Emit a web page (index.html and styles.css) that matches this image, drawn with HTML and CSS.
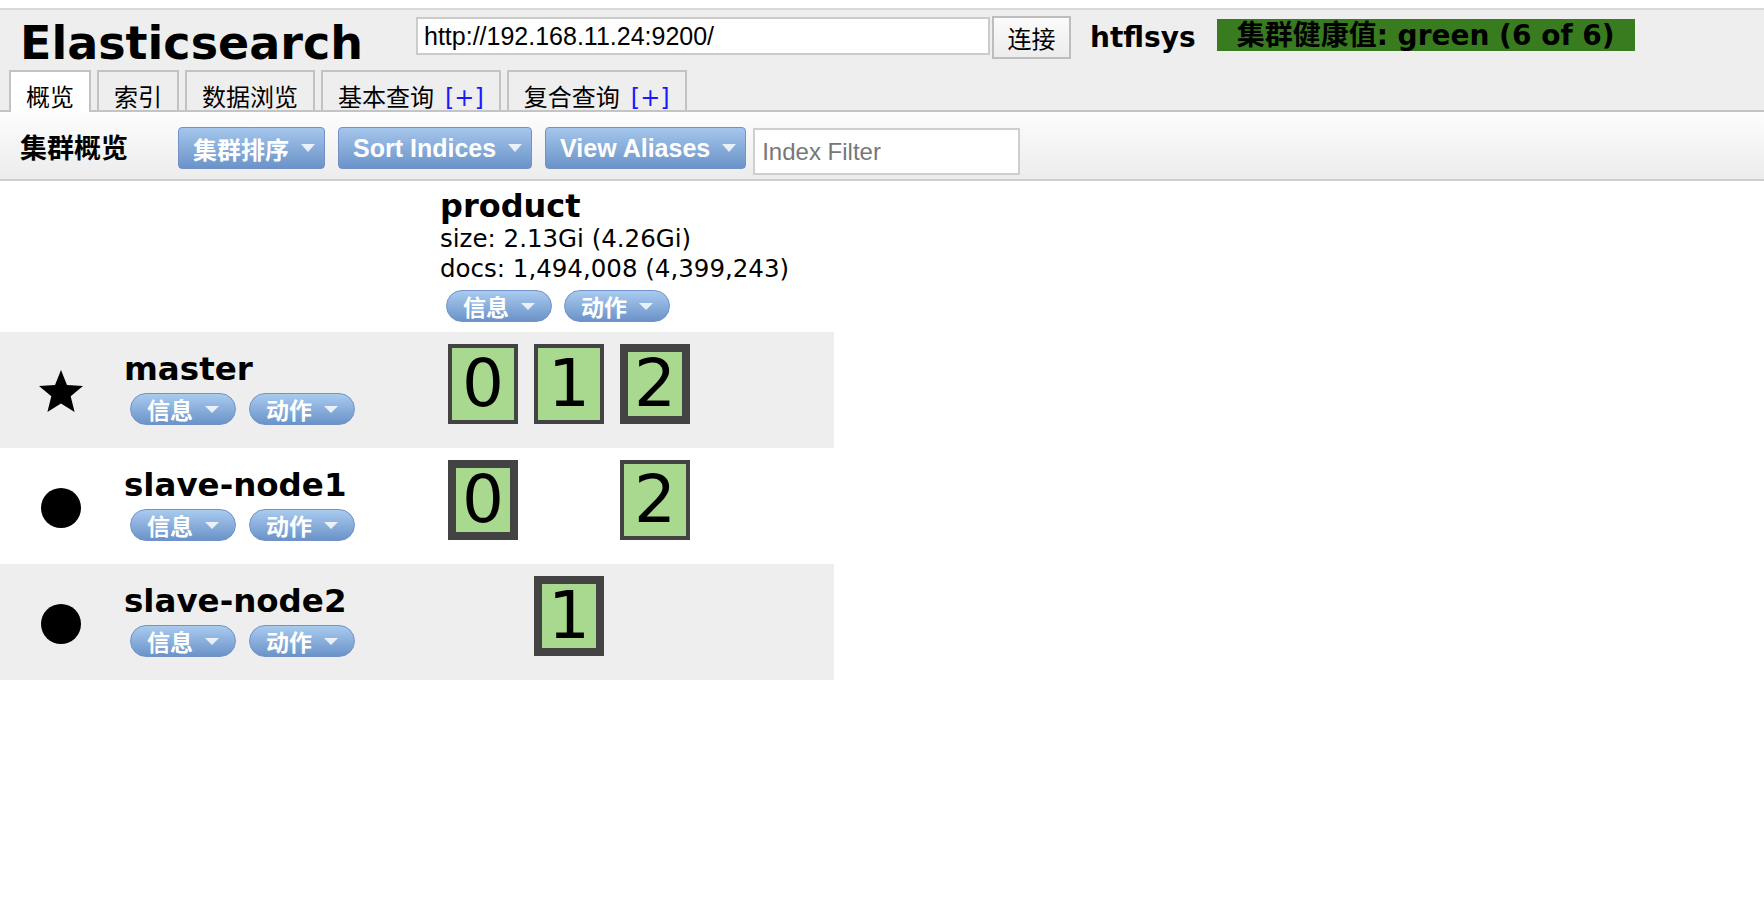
FILE: index.html
```html
<!DOCTYPE html>
<html lang="zh-CN">
<head>
<meta charset="utf-8">
<title>Elasticsearch</title>
<link rel="stylesheet" href="styles.css">
</head>
<body>
<div class="app">
  <header class="header">
    <div class="header-top">
      <h1 class="brand">Elasticsearch</h1>
      <input class="url" type="text" value="http://192.168.11.24:9200/">
      <button class="connect" type="button">连接</button>
      <span class="cluster-name">htflsys</span>
      <span class="health">集群健康值: green (6 of 6)</span>
    </div>
    <nav class="tabs">
      <div class="tab active">概览</div>
      <div class="tab">索引</div>
      <div class="tab">数据浏览</div>
      <div class="tab">基本查询<span class="plus">[+]</span></div>
      <div class="tab">复合查询<span class="plus">[+]</span></div>
    </nav>
  </header>

  <div class="toolbar">
    <h2 class="toolbar-title">集群概览</h2>
    <button class="menu-btn" type="button"><span class="label">集群排序</span><span class="caret"></span></button>
    <button class="menu-btn latin" type="button"><span class="label">Sort Indices</span><span class="caret"></span></button>
    <button class="menu-btn latin last" type="button"><span class="label">View Aliases</span><span class="caret"></span></button>
    <input class="filter" type="text" placeholder="Index Filter">
  </div>

  <div class="cluster">
    <div class="row head">
      <div class="node-col"></div>
      <div class="index-col">
        <div class="index-name">product</div>
        <div class="index-stat">size: 2.13Gi (4.26Gi)</div>
        <div class="index-stat">docs: 1,494,008 (4,399,243)</div>
        <div class="pills">
          <span class="pill"><span class="label">信息</span><span class="caret small"></span></span>
          <span class="pill"><span class="label">动作</span><span class="caret small"></span></span>
        </div>
      </div>
    </div>

    <div class="row alt">
      <div class="node-col">
        <div class="node-icon">
          <svg class="icon-star" viewBox="2.45 0 95.1 90.45"><path d="M50 0 L62.93 32.2 L97.55 34.55 L70.92 56.8 L79.39 90.45 L50 72 L20.61 90.45 L29.08 56.8 L2.45 34.55 L37.07 32.2 Z"/></svg>
        </div>
        <div class="node-info">
          <div class="node-name">master</div>
          <div class="pills">
            <span class="pill"><span class="label">信息</span><span class="caret small"></span></span>
            <span class="pill"><span class="label">动作</span><span class="caret small"></span></span>
          </div>
        </div>
      </div>
      <div class="shards">
        <div class="shard">0</div>
        <div class="shard">1</div>
        <div class="shard primary">2</div>
      </div>
    </div>

    <div class="row">
      <div class="node-col">
        <div class="node-icon">
          <svg class="icon-dot" viewBox="0 0 40 40"><circle cx="20" cy="20" r="20"/></svg>
        </div>
        <div class="node-info">
          <div class="node-name">slave-node1</div>
          <div class="pills">
            <span class="pill"><span class="label">信息</span><span class="caret small"></span></span>
            <span class="pill"><span class="label">动作</span><span class="caret small"></span></span>
          </div>
        </div>
      </div>
      <div class="shards">
        <div class="shard primary">0</div>
        <div class="slot"></div>
        <div class="shard">2</div>
      </div>
    </div>

    <div class="row alt">
      <div class="node-col">
        <div class="node-icon">
          <svg class="icon-dot" viewBox="0 0 40 40"><circle cx="20" cy="20" r="20"/></svg>
        </div>
        <div class="node-info">
          <div class="node-name">slave-node2</div>
          <div class="pills">
            <span class="pill"><span class="label">信息</span><span class="caret small"></span></span>
            <span class="pill"><span class="label">动作</span><span class="caret small"></span></span>
          </div>
        </div>
      </div>
      <div class="shards">
        <div class="slot"></div>
        <div class="shard primary">1</div>
        <div class="slot"></div>
      </div>
    </div>
  </div>
</div>
</body>
</html>
```

FILE: styles.css
```css
* { box-sizing: border-box; }

html, body {
  margin: 0;
  padding: 0;
  background: #fff;
}

body {
  font-family: "DejaVu Sans", "Noto Sans CJK SC", sans-serif;
  color: #000;
}

/* ---------- header ---------- */
.header {
  margin-top: 8px;
  border-top: 2px solid #d8d8d8;
  border-bottom: 2px solid #c4c4c4;
  background: #eee;
}

.header-top {
  display: flex;
  align-items: flex-start;
  height: 60px;
}

.brand {
  width: 416px;
  margin: 10px 0 0;
  padding-left: 20px;
  font-size: 46px;
  line-height: 46px;
  font-weight: bold;
}

.url {
  margin-top: 7px;
  width: 574px;
  height: 38px;
  border: 2px solid #cbcbcb;
  padding: 0 6px;
  font-family: "Liberation Sans", "Noto Sans CJK SC", sans-serif;
  font-size: 25px;
  color: #000;
  background: #fff;
  outline: none;
}

.connect {
  margin: 6px 0 0 2px;
  width: 79px;
  height: 43px;
  padding: 0;
  border: 2px solid #bdbdbd;
  border-radius: 0;
  background: linear-gradient(#fbfbfb, #ececec);
  font-family: "Noto Sans CJK SC", sans-serif;
  font-size: 24px;
  color: #000;
}

.cluster-name {
  margin: 12px 0 0 19px;
  font-size: 28px;
  line-height: 32px;
  font-weight: bold;
}

.health {
  margin: 9px 0 0 21px;
  height: 32px;
  padding: 2px 20px 0;
  background: #387c1f;
  font-size: 28px;
  line-height: 30px;
  font-weight: bold;
  white-space: nowrap;
}

.tabs {
  display: flex;
  align-items: flex-start;
  gap: 6px;
  height: 40px;
  padding-left: 9px;
}

.tab {
  height: 40px;
  padding: 14px 15px 0;
  border: 2px solid #c3c3c3;
  border-bottom: none;
  background: #eee;
  font-size: 24px;
  line-height: 24px;
  white-space: nowrap;
}

.tab.active {
  height: 42px;
  background: #fff;
}

.plus {
  margin-left: 11px;
  color: #1a1aff;
}

/* ---------- toolbar ---------- */
.toolbar {
  display: flex;
  align-items: flex-start;
  height: 69px;
  padding-left: 20px;
  border-bottom: 2px solid #cdcdcd;
  background: linear-gradient(#fdfdfd, #ececec);
}

.toolbar-title {
  margin: 19px 50px 0 0;
  font-size: 27px;
  line-height: 36px;
  font-weight: bold;
}

.menu-btn {
  margin: 15px 13px 0 0;
  height: 42px;
  display: flex;
  align-items: center;
  gap: 12px;
  padding: 0 9px 0 14px;
  border: 1px solid #7391c6;
  border-radius: 4px;
  background: linear-gradient(#a5c6ec, #6a93c8);
  color: #fff;
  font-family: "Liberation Sans", "Noto Sans CJK SC", sans-serif;
  font-weight: bold;
  font-size: 24px;
  white-space: nowrap;
}

.menu-btn.latin { font-size: 25px; }
.menu-btn.last { margin-right: 7px; }

.caret {
  width: 0;
  height: 0;
  border-left: 7px solid transparent;
  border-right: 7px solid transparent;
  border-top: 8px solid rgba(255, 255, 255, 0.82);
}

.caret.small {
  border-top-width: 7px;
}

.filter {
  margin-top: 16px;
  width: 267px;
  height: 47px;
  padding: 0 7px;
  border: 2px solid #cfcfcf;
  background: #fff;
  font-family: "Liberation Sans", sans-serif;
  font-size: 24px;
  outline: none;
}

.filter::placeholder { color: #777; }

/* ---------- cluster overview ---------- */
.cluster {
  width: 834px;
}

.row {
  display: flex;
  height: 116px;
}

.row.head { height: 151px; }
.row.alt { background: #eee; }

.node-col {
  width: 440px;
  flex: none;
  display: flex;
  align-items: flex-start;
}

.node-icon {
  margin-left: 38px;
  width: 46px;
  flex: none;
  display: flex;
  justify-content: center;
}

.icon-star {
  margin-top: 38px;
  width: 44px;
  height: 42px;
}

.icon-dot {
  margin-top: 40px;
  width: 40px;
  height: 40px;
}

.node-info {
  margin-left: 40px;
  padding-top: 19px;
}

.node-name,
.index-name {
  font-size: 32px;
  line-height: 36px;
  font-weight: bold;
  white-space: nowrap;
}

.node-name { font-size: 32.5px; }

.index-col {
  padding-top: 7px;
}

.index-stat {
  font-size: 24.5px;
  line-height: 30px;
  white-space: nowrap;
}

.pills {
  display: flex;
  gap: 13px;
  margin: 6px 0 0 6px;
}

.index-col .pills {
  margin-top: 6px;
  gap: 12px;
}

.pill {
  height: 32px;
  display: flex;
  align-items: center;
  gap: 12px;
  padding: 0 16px;
  border: 1px solid #7392c8;
  border-radius: 16px;
  background: linear-gradient(#a9cbef, #6b93c8);
  color: #fff;
  font-family: "Noto Sans CJK SC", sans-serif;
  font-size: 23px;
  font-weight: bold;
}

.shards {
  display: grid;
  grid-template-columns: repeat(3, 70px);
  column-gap: 16px;
  align-content: start;
  padding: 12px 0 0 8px;
}

.shard {
  height: 80px;
  display: flex;
  align-items: center;
  justify-content: center;
  border: 4px solid #434343;
  background: #a9d98f;
  font-size: 66px;
  line-height: 1;
}

.shard.primary { border-width: 8px; }
```
